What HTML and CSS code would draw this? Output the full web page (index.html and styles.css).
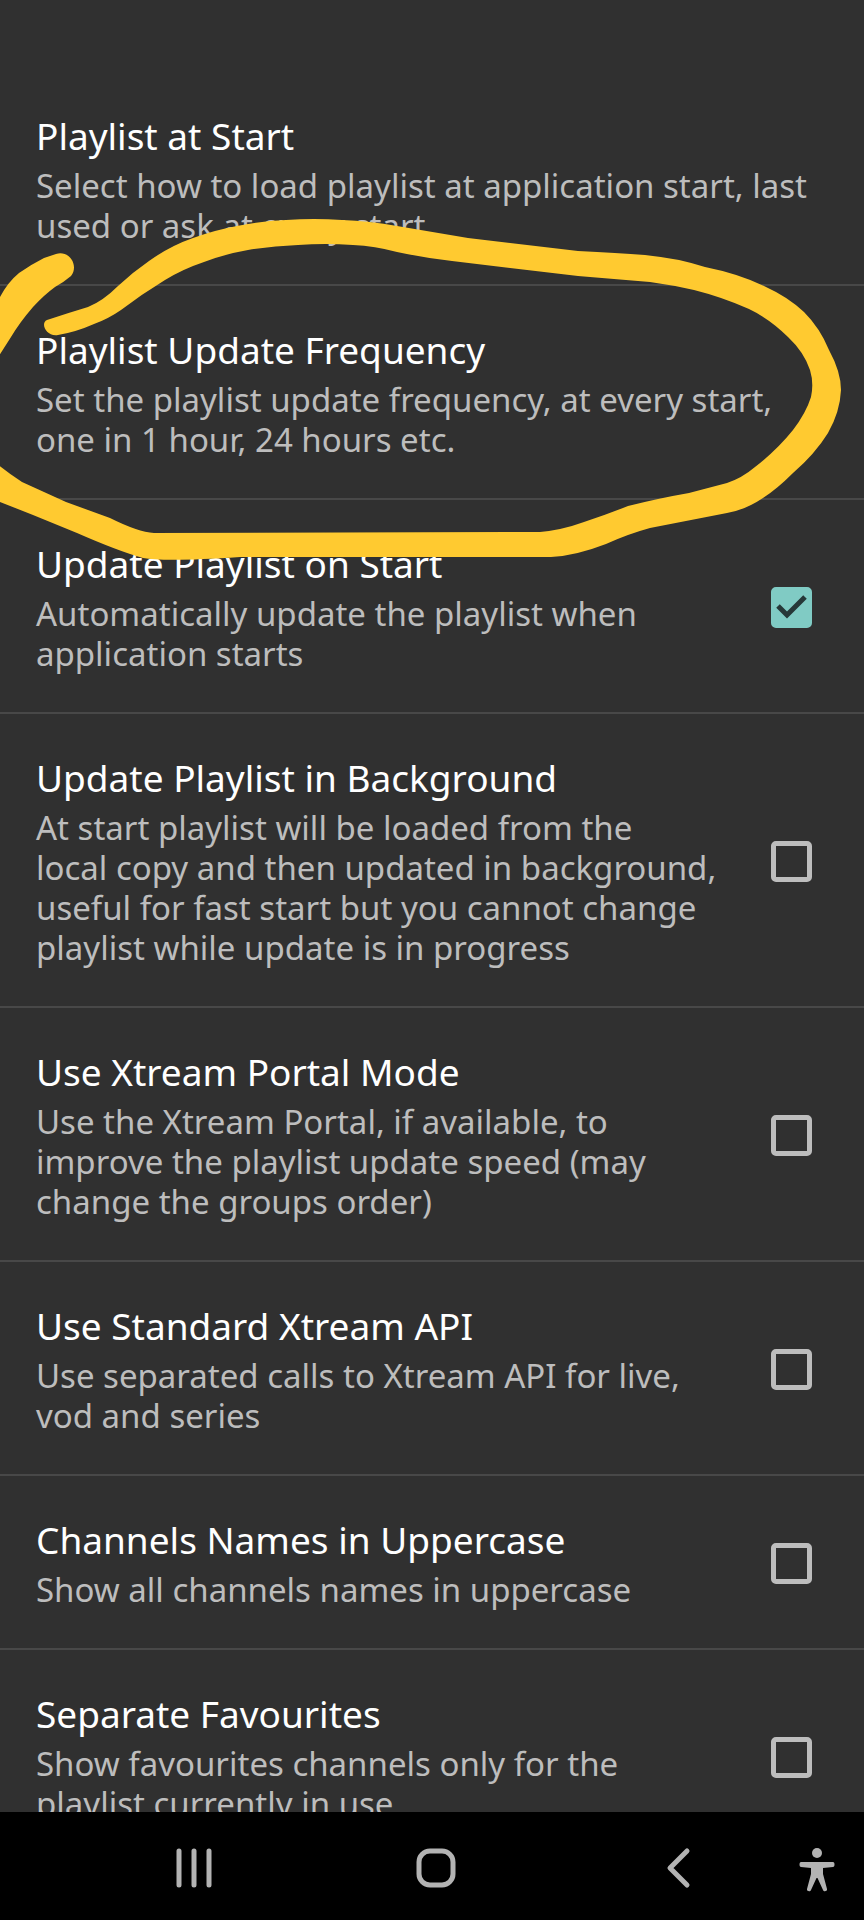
FILE: index.html
```html
<!DOCTYPE html>
<html lang="en">
	<head>
		<meta charset="utf-8">
		<meta name="viewport" content="width=device-width, initial-scale=1">
		<title>Playlist settings</title>
		<link rel="stylesheet" href="styles.css">
	</head>
	<body>

		<!-- settings -->
		<main class="settings">
			<a class="item" href="#start">
				<span class="text">
					<span class="title">Playlist at Start</span>
					<span class="desc">Select how to load playlist at application start, last<br>used or ask at every start.</span>
				</span>
			</a>
			<a class="item" href="#frequency">
				<span class="text">
					<span class="title">Playlist Update Frequency</span>
					<span class="desc">Set the playlist update frequency, at every start,<br>one in 1 hour, 24 hours etc.</span>
				</span>
			</a>
			<label class="item">
				<span class="text">
					<span class="title">Update Playlist on Start</span>
					<span class="desc">Automatically update the playlist when<br>application starts</span>
				</span>
				<span class="check">
					<input type="checkbox" checked>
					<svg viewBox="0 0 41 41"><path d="M7 19l9 9 18-18"/></svg>
				</span>
			</label>
			<label class="item">
				<span class="text">
					<span class="title">Update Playlist in Background</span>
					<span class="desc">At start playlist will be loaded from the<br>local copy and then updated in background,<br>useful for fast start but you cannot change<br>playlist while update is in progress</span>
				</span>
				<span class="check">
					<input type="checkbox">
					<svg viewBox="0 0 41 41"><path d="M7 19l9 9 18-18"/></svg>
				</span>
			</label>
			<label class="item">
				<span class="text">
					<span class="title">Use Xtream Portal Mode</span>
					<span class="desc">Use the Xtream Portal, if available, to<br>improve the playlist update speed (may<br>change the groups order)</span>
				</span>
				<span class="check">
					<input type="checkbox">
					<svg viewBox="0 0 41 41"><path d="M7 19l9 9 18-18"/></svg>
				</span>
			</label>
			<label class="item">
				<span class="text">
					<span class="title">Use Standard Xtream API</span>
					<span class="desc">Use separated calls to Xtream API for live,<br>vod and series</span>
				</span>
				<span class="check">
					<input type="checkbox">
					<svg viewBox="0 0 41 41"><path d="M7 19l9 9 18-18"/></svg>
				</span>
			</label>
			<label class="item">
				<span class="text">
					<span class="title">Channels Names in Uppercase</span>
					<span class="desc">Show all channels names in uppercase</span>
				</span>
				<span class="check">
					<input type="checkbox">
					<svg viewBox="0 0 41 41"><path d="M7 19l9 9 18-18"/></svg>
				</span>
			</label>
			<label class="item">
				<span class="text">
					<span class="title">Separate Favourites</span>
					<span class="desc">Show favourites channels only for the<br>playlist currently in use</span>
				</span>
				<span class="check">
					<input type="checkbox">
					<svg viewBox="0 0 41 41"><path d="M7 19l9 9 18-18"/></svg>
				</span>
			</label>

			<!-- marker drawn around the update frequency -->
			<svg class="marker" viewBox="0 0 864 600" aria-hidden="true">
				<path d="M47 320 Q68 313 88 307 Q103 301 118 286 Q133 272 149 261 Q170 246 193 238 Q215 230 237 226 Q262 221 286 220 Q314 218 342 220 Q370 221 397 226 L468 238 L578 251 Q618 253 645 255 Q677 258 705 267 Q740 274 766 287 Q788 297 804 312 Q820 328 829 350 Q841 372 841 390 Q840 412 828 433 Q815 454 793 473 Q777 489 763 498 Q745 510 727 513 L650 528 Q628 534 606 544 Q575 556 551 557 L240 557 Q165 562 143 558 Q118 551 77 533 L33 515 L-10 498 L-10 458 Q5 471 22 482 L66 502 L110 518 Q138 532 154 533 L540 532 Q562 530 584 522 Q608 514 628 506 Q660 498 689 493 L727 483 Q742 478 755 467 Q777 450 793 430 Q806 413 811 397 Q814 383 810 370 Q804 352 788 337 Q770 319 749 309 Q722 297 694 290 Q672 285 650 282 L578 276 L452 261 Q425 258 397 252 Q375 246 353 245 Q325 243 298 245 Q272 246 248 250 Q225 254 204 262 Q183 269 165 280 Q142 294 121 310 Q108 319 94 324 Q76 332 58 335 C46 337 40 323 47 320Z"/>
				<path d="M-10 308 L0 297 Q8 282 19 273 Q32 264 44 258 L56 254 C70 250 79 266 71 276 Q64 282 55 287 Q44 295 33 307 Q20 322 11 337 L-10 370Z"/>
			</svg>
		</main>

		<!-- navigation bar -->
		<nav class="navbar">
			<button type="button" aria-label="Recent apps">
				<svg width="44" height="44" viewBox="0 0 44 44"><path d="M7 5v34M22 5v34M37 5v34"/></svg>
			</button>
			<button type="button" aria-label="Home">
				<svg width="44" height="44" viewBox="0 0 44 44"><rect x="5" y="5" width="34" height="34" rx="11"/></svg>
			</button>
			<button type="button" aria-label="Back">
				<svg width="44" height="44" viewBox="0 0 44 44"><path d="M31 5L14 22l17 17"/></svg>
			</button>
			<button type="button" class="access" aria-label="Accessibility">
				<svg width="36" height="48" viewBox="0 0 36 48">
					<circle cx="18" cy="9" r="5"/>
					<path d="M2 18h32c2 0 2 5 0 5l-10 1v6l4 15c.5 2.500-3.500 3-4 1L18.500 34h-1L12 46c-.5 2-4.500 1.500-4-1l4-15v-6L2 23c-2 0-2-5 0-5z"/>
				</svg>
			</button>
		</nav>
	</body>
</html>
```
FILE: styles.css
```css
*{
	box-sizing: border-box;
}

body{
	margin: 0;
	height: 100vh;
	display: flex;
	flex-direction: column;
	background-color: #303030;
	color: #fff;
	font-family: "Noto Sans", sans-serif;
}

/* ############## settings */
.settings{
	position: relative;
	flex: 1;
	min-height: 0;
	padding-top: 72px;
	overflow: hidden;
}

.item{
	display: flex;
	align-items: center;
	justify-content: space-between;
	padding: 40px 52px 38px 36px;
	border-bottom: 2px solid #484848;
	color: inherit;
	text-decoration: none;
}

.text{
	white-space: nowrap;
}

.title,
.desc{
	display: block;
}

.title{
	margin-bottom: 6px;
	font-size: 37px;
	line-height: 48px;
}

.desc{
	color: #bdbdbd;
	font-size: 33px;
	line-height: 40px;
}

/* checkbox */
.check{
	display: grid;
	flex: none;
}

.check input,
.check svg{
	grid-area: 1 / 1;
	width: 41px;
	height: 41px;
	margin: 0;
}

.check input{
	appearance: none;
	border: 5px solid #bdbdbd;
	border-radius: 5px;
}

.check input:checked{
	border-color: #80cbc4;
	background-color: #80cbc4;
}

.check svg{
	visibility: hidden;
	fill: none;
	stroke: #263838;
	stroke-width: 5;
	pointer-events: none;
}

.check input:checked + svg{
	visibility: visible;
}

/* marker lies over the list */
.marker{
	position: absolute;
	top: 0;
	left: 0;
	width: 100%;
	fill: #ffca30;
	pointer-events: none;
}

/* ############## navigation bar */
.navbar{
	display: flex;
	flex: none;
	height: 108px;
	padding: 4px 29px 0 73px;
	background-color: #000;
}

.navbar button{
	display: flex;
	flex: 1;
	align-items: center;
	justify-content: center;
	padding: 0;
	border: 0;
	background: none;
}

.navbar svg{
	fill: none;
	stroke: #b3b3b3;
	stroke-width: 5;
	stroke-linecap: round;
	stroke-linejoin: round;
}

.navbar .access{
	flex: none;
	width: 36px;
}

.navbar .access svg{
	fill: #b3b3b3;
	stroke: none;
}
```
